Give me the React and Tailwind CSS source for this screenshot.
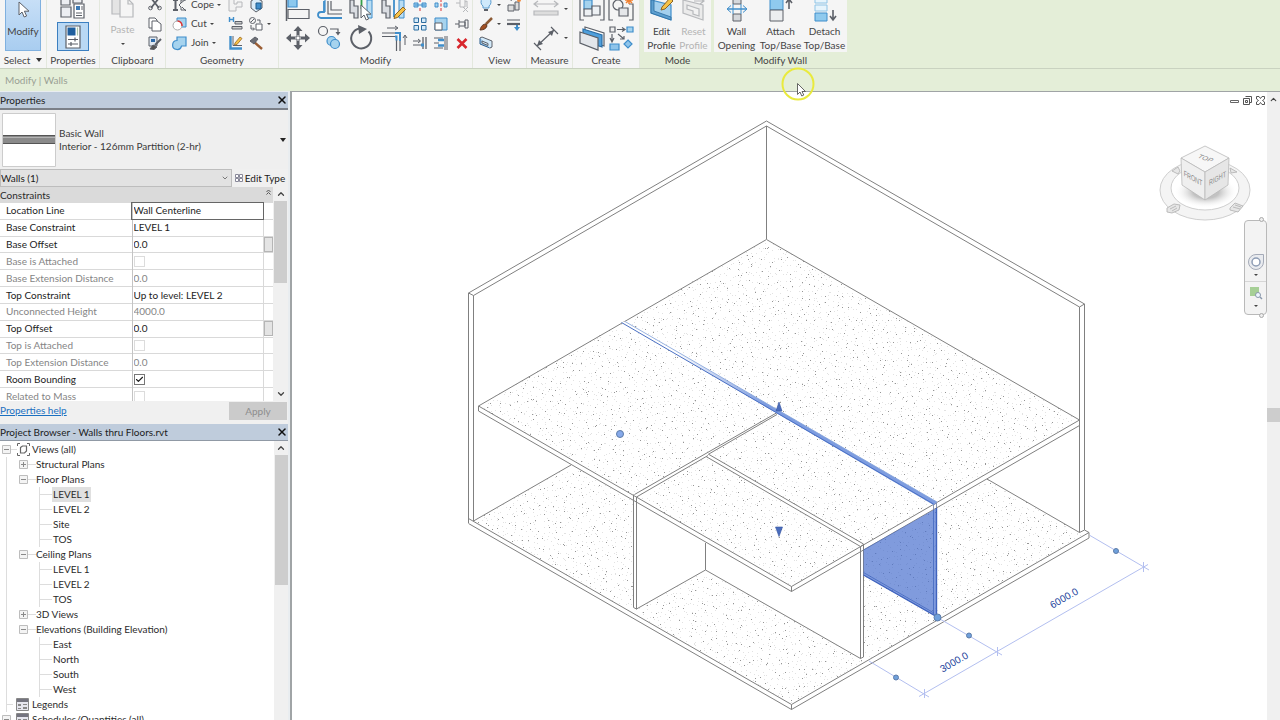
import { useState } from 'react'
import { Check, ChevronDown, ChevronUp, X } from 'lucide-react'

const INK = '#5c6068'
const BLUE = '#3f8ecb'
const SKY = '#a6d3ee'

/* ---------- icon helpers ---------- */

function Small({ children, dim }) {
  return (
    <svg width="16" height="16" viewBox="0 0 16 16" fill="none" stroke={INK} strokeWidth="1" className={dim ? 'opacity-40 shrink-0' : 'shrink-0'}>
      {children}
    </svg>
  )
}

function Large({ children, dim }) {
  return (
    <svg width="28" height="28" viewBox="0 0 28 28" fill="none" stroke={INK} strokeWidth="1.2" className={dim ? 'opacity-40 shrink-0' : 'shrink-0'}>
      {children}
    </svg>
  )
}

function Caret() {
  return (
    <svg width="4" height="2" viewBox="0 0 4 2" className="shrink-0">
      <path d="M0 0h4L2 2z" fill="#444" />
    </svg>
  )
}

const pointer = 'M1 0v13l3-3 2.2 5 2.4-1-2.2-4.8H11z'

const icons = {
  select: (
    <Large><path transform="translate(9 6)" d={pointer} fill="#fff" strokeWidth="1" /></Large>
  ),
  typeProps: (
    <Large>
      <path d="M2 0h9v11H2zM14 0h9v9h-9zM2 13h10v10H2z" fill="#eceef2" />
      <path d="M15 10h10v14H15z" fill="#fff" />
      <path d="M17 12h4v4h-4z" fill="#3d7ab5" stroke="none" />
      <path d="M23 12v4M17 19h6M17 21.500h6" strokeWidth="1" />
    </Large>
  ),
  props: (
    <Large>
      <path d="M7 3h14v22H7z" fill="#fff" />
      <path d="M8.500 4.500h8v8h-8z" fill="#1f5f9e" stroke="none" />
      <path d="M18.500 4.500v8" stroke="#a9c6a9" />
      <path d="M9 16.500h10M9 21h10M16 14.500v4M12 19v4" />
    </Large>
  ),
  paste: (
    <Large dim>
      <path d="M3 2h15v18H3z" fill="#ccc" />
      <path d="M11 5h8l5 5v13H11z" fill="#f6f6f6" /><path d="M19 5v5h5" />
    </Large>
  ),
  scissors: (
    <Small><path d="M4 1l8 10M12 1L4 11" strokeWidth="1.8" /><circle cx="3.500" cy="11" r="1.800" /><circle cx="12.500" cy="11" r="1.800" /></Small>
  ),
  copy: (
    <Small><path d="M2 2h6l2 2v8H2z" fill="#fff" /><path d="M5 5h5l4 3v7H5z" fill="#fff" /></Small>
  ),
  match: (
    <Small><path d="M2 2h8v9H2z" fill="#dfe8f2" /><path d="M4 4h4v3H4z" fill="#2d6aa8" stroke="none" /><path d="M14 4L8 10" strokeWidth="2" /><path d="M3 14l3-4 4 2-3 2.500z" fill="#555" /></Small>
  ),
  cope: (
    <Small><path d="M1 3h5M3.500 3v10M1 13h5" strokeWidth="2" /><path d="M14 3H9v3l-2 2 2 2v3h5M14 2L9 6M14 14l-4-4" /></Small>
  ),
  cut: (
    <Small><path d="M5 2h9v9H8V7H5z" fill={SKY} stroke={BLUE} /><circle cx="5.500" cy="9.500" r="4.500" fill="#fff" stroke="#aaa" /><path d="M5.500 5a4.500 4.500 0 0 1 4.500 5" stroke="#d33" strokeWidth="1.500" /></Small>
  ),
  join: (
    <Small><path d="M5 2h9v9H9.500A4.500 4.500 0 1 1 5 5.500z" fill={SKY} stroke={BLUE} strokeWidth="1.200" /></Small>
  ),
  joinRoof: (
    <Small dim><path d="M1 2h5v5h3V5h5v5H8v4H1z" fill="#eee" /></Small>
  ),
  beam: (
    <Small><path d="M1.500 1v5M5.500 1v5M1.500 3.500h4" stroke={BLUE} strokeWidth="1.400" /><path d="M7 5.500h7v2.500H7zM4 10.500h10v2.500H4z" fill="#ccc" /></Small>
  ),
  wallJoin: (
    <Small><path d="M2.500 1v12.500H14" strokeWidth="2.400" stroke={BLUE} /><path d="M5 1v9.500h9" /><path d="M7 8l5-6 2 1.500-5 6L6.500 10z" fill="#f6c247" stroke="#9a6a24" strokeWidth=".8" /></Small>
  ),
  split: (
    <Small><path d="M3 4l5-3 6 3v7l-6 4-5-4z" fill="#d9ecf8" /><path d="M8 6h5v6H8z" fill={BLUE} stroke="#1c5a8c" /></Small>
  ),
  paint: (
    <Small><circle cx="4.500" cy="4.500" r="3" /><path d="M3 6l3-3" /><path d="M8 8h6v6H8z" fill="#fff" /><path d="M3 9v4h3M5 11.500L6.500 13 5 14.500M9 4h3v3" /></Small>
  ),
  hammer: (
    <Small><path d="M6 7l8 7" stroke="#9a5d33" strokeWidth="2.400" /><path d="M2 6l5-4 3 2-4 5z" fill="#6c6f76" /></Small>
  ),
  align: (
    <Large><path d="M2.500 1v25" strokeWidth="1.500" /><path d="M4 3h9v9H4z" fill="#8cc8ee" stroke={BLUE} /><path d="M4 14.500h21v9H4z" fill="#f4f4f4" /></Large>
  ),
  offset: (
    <Large>
      <path d="M26 23H5a3 3 0 0 1 0-6h3V6" strokeWidth="1.800" stroke={BLUE} />
      <path d="M26 19H12V6M15 6v9h11" /><path d="M9 4v13" stroke={BLUE} />
    </Large>
  ),
  mirrorPick: (
    <Large>
      <path d="M2 5h4v6h4v12H6v-5H2z" fill="#dadde2" /><path d="M24 5h-5v18h5z" fill="#b9ddf3" stroke={BLUE} strokeWidth="1" />
      <path d="M13.500 2v12" stroke="#33a04a" strokeWidth="1.800" /><path transform="translate(12 10)" d={pointer} fill="#fff" strokeWidth="1" />
    </Large>
  ),
  mirrorDraw: (
    <Large>
      <path d="M2 5h4v6h4v12H6v-5H2z" fill="#dadde2" /><path d="M24 5h-5v18h5z" fill="#b9ddf3" stroke={BLUE} strokeWidth="1" />
      <path d="M14 2v20" stroke={BLUE} strokeWidth="1.800" /><path d="M15 20l8-8 2.500 2.500-8 8-3.500 1z" fill="#f6c247" stroke="#8a6326" strokeWidth="1" />
    </Large>
  ),
  move: (
    <Large>
      <path d="M14 6v5M14 17v5M6 14h5M17 14h5" strokeWidth="3" />
      <path d="M14 2l4.500 5h-9zM14 26l4.500-5h-9zM2 14l5-4.500v9zM26 14l-5-4.500v9z" fill={INK} stroke="none" />
      <path d="M12 12h4v4h-4z" fill="#fff" strokeWidth="1" />
    </Large>
  ),
  copyEl: (
    <Large>
      <circle cx="7" cy="7" r="4.500" fill="#f5f5f5" /><path d="M14 5h8v4" /><path d="M19.500 8h5L22 11.500z" fill={INK} stroke="none" />
      <circle cx="15.500" cy="17" r="4.500" fill={SKY} stroke={BLUE} /><circle cx="19" cy="20" r="4.500" fill={SKY} stroke={BLUE} />
    </Large>
  ),
  rotate: (
    <Large><path d="M20.500 7.500a10 10 0 1 1-9-3" strokeWidth="2" /><path d="M10 1l9 4-8 5z" fill={INK} stroke="none" /></Large>
  ),
  trim: (
    <Large>
      <path d="M2 9h15M2 12.500h13M20 16v11M16.500 16v11" /><path d="M15 9h5v8M15 12.500h1.500v4" stroke={BLUE} strokeWidth="2" />
      <path d="M7 4h10M15 2l3 2-3 2M25 21v-9M23 14l2-3 2 3" strokeWidth="1" />
    </Large>
  ),
  splitEl: (
    <Small><path d="M2 6h4v4H2zM10 6h4v4h-4z" fill={SKY} stroke={BLUE} /><path d="M3 8h10" stroke={BLUE} /><path d="M8 2v3M8 11v3" stroke="#d33" /></Small>
  ),
  splitGap: (
    <Small><path d="M2 6h3v4H2zM11 6h3v4h-3z" fill={SKY} stroke={BLUE} /><path d="M8 2v3M8 6.500v3M8 11v3" stroke="#d33" /></Small>
  ),
  unpin: (
    <Small dim><path d="M2 6h4M6 3v7h5V3M11 5l2-1v6M9 10l5 5M14 10l-5 5" /></Small>
  ),
  array: (
    <Small><path d="M2 2h4.500v4.500H2zM9.500 2H14v4.500H9.500zM2 9.500h4.500V14H2z" fill="#d3eafa" stroke="#2b6c9f" /><path d="M9.500 9.500H14V14H9.500z" fill="#d3eafa" stroke="#2b6c9f" /></Small>
  ),
  scale: (
    <Small><path d="M2 2h12v12H2z" fill={SKY} stroke={BLUE} /><path d="M2 7h7v7H2z" fill="#fff" /></Small>
  ),
  pin: (
    <Small><path d="M1 8h4M5 4v8M5 6h6v4H5M11 4v8h3V4z" /></Small>
  ),
  trimOne: (
    <Small><path d="M1 6h7M6 4l2.500 2L6 8M1 10h9" /><path d="M11 2v12M14 2v12" strokeWidth="1.300" /><path d="M9 10h3" stroke={BLUE} strokeWidth="3" /></Small>
  ),
  trimMany: (
    <Small><path d="M1 3h9M1 13h9M1 8h5" /><path d="M5 5h6M5 10.500h6" stroke={BLUE} strokeWidth="2.500" /><path d="M12 1v14M14 1v14" /></Small>
  ),
  remove: (
    <Small><path d="M3.500 4l9 9M12.500 4l-9 9" stroke="#d8262c" strokeWidth="2.600" /></Small>
  ),
  bulb: (
    <Small><path d="M5 9a5 5 0 1 1 6 0v2H5z" fill="#cfe9fb" stroke="#5b9ccf" /><path d="M6 13h4" strokeWidth="2" /></Small>
  ),
  brush: (
    <Small><path d="M14 2L8 8" stroke="#8c5a34" strokeWidth="2.500" /><path d="M2 14c1-4 3-6 6-6l1 2c-1 3-4 4-7 4z" fill="#a14f23" stroke="#5d3620" /></Small>
  ),
  cutProfile: (
    <Small><path d="M2 3l10 4v6L2 9z" fill="#9cc7ea" stroke="#2c5f8d" /><path d="M2 3l2-1 10 4v6l-2 1M4 6l6 2.500v2L4 8z" fill="#d3eafa" /></Small>
  ),
  hideEl: (
    <Small><path d="M2 8h6v6H2zM9 5h4v8H9z" fill="#ddd" /><path d="M5 4a4 3 0 0 1 7-2" /><circle cx="13" cy="3" r="2" fill="#f08a3c" stroke="none" /></Small>
  ),
  linework: (
    <Small><path d="M1 4h13" /><path d="M1 8h13" strokeWidth="2.200" /><path d="M11 9v3" stroke={BLUE} strokeWidth="2" /><path d="M8 11h6l-3 4z" fill={BLUE} stroke="none" /></Small>
  ),
  measure: (
    <Large dim><path d="M3 9h22M6 6L2 9l4 3M22 6l4 3-4 3" /><path d="M2 16h24v4H2z" fill="#bbb" /></Large>
  ),
  dimension: (
    <Large><path d="M5 22L22 6M2 19l7 7M19 3l7 7" /><path d="M5 22l2-6 4 4zM22 6l-2 6-4-4z" fill={INK} stroke="none" /></Large>
  ),
  group: (
    <Large>
      <path d="M5 2H2v23h4M22 2h4v23h-4" /><path d="M6 5h8v9H6z" fill={SKY} stroke={BLUE} /><path d="M6 14h8v7H6zM14 11h8v9h-8z" fill="#eef1f4" />
    </Large>
  ),
  similar: (
    <Large>
      <path d="M5 2H2v23h4M22 9h4v16h-4" /><circle cx="11" cy="10" r="5" /><path d="M12 13h9v8h-9z" fill="#e5e7ea" />
      <path d="M22 1v8M18 5h8M19 2l6 6M25 2l-6 6" stroke="#f08030" strokeWidth="1.500" />
    </Large>
  ),
  parts: (
    <Large>
      <path d="M7 3l19 6v13L7 15z" fill="#fff" /><path d="M5 5l19 6v12L5 17z" fill="#4e9fdc" stroke="#2a6da5" /><path d="M2 8l18 6v12L2 19z" fill="#e3e6ea" />
    </Large>
  ),
  assembly: (
    <Large>
      <path d="M3 3h5v5H3z" fill="#eee" /><path d="M20 3h6v5h-6z" fill={SKY} stroke={BLUE} /><path d="M10 5.500h7M15 3.500l3 2-3 2M5 10v7M3 14l2 4 2-4M11 10l6 5M13 15h4v-3" />
      <path d="M3 20h9v6H3zM21 16l4 4-4 4-4-4z" fill="#8fc4ea" stroke={BLUE} />
    </Large>
  ),
  editProfile: (
    <Large><path d="M3 4l20 5v15L3 17z" fill="#a3d0ee" stroke={BLUE} /><path d="M3 4h3v11l17 6v3L3 17z" fill="#5c9fd0" stroke="#2b6ca0" strokeWidth=".8" /><path d="M14 11l8-9 3 3-8 8-4 1z" fill="#f6c247" stroke="#8a6326" strokeWidth="1" /></Large>
  ),
  resetProfile: (
    <Large dim><path d="M3 4l20 5v15L3 17z" fill="#ddd" /><path d="M7 9l12 4v7l-6-2v-3l-6-2z" fill="#eee" /><path d="M14 5h9M20 2l4 3-4 3" /></Large>
  ),
  opening: (
    <Large><path d="M10 1h8v7h-8zM10 18h8v7h-8z" fill="#d5d8dc" strokeWidth="1" /><path d="M5 13h18" stroke={BLUE} strokeWidth="1.500" /><path d="M8 9.500L4 13l4 3.500M20 9.500l4 3.500-4 3.500M10 8v10M18 8v10" stroke={BLUE} strokeWidth="1" /></Large>
  ),
  attach: (
    <Large><path d="M3 1h13v13H3z" fill="#8fcaee" stroke={BLUE} strokeWidth="1" /><path d="M3 14h13v11H3z" fill="#eceef0" strokeWidth="1" /><path d="M22 13V4M19 7l3-4 3 4" strokeWidth="1.600" /></Large>
  ),
  detach: (
    <Large><path d="M4 1h12v6H4zM4 9h12v6H4z" fill="#e6f4fc" stroke="#8fc4e6" strokeWidth="1" /><path d="M4 17h12v8H4z" fill="#8fcaee" stroke={BLUE} strokeWidth="1" /><path d="M22 14v9M19 20l3 4 3-4" strokeWidth="1.600" /></Large>
  ),
}

/* ---------- ribbon ---------- */

function Panel({ title, width, green, children }) {
  return (
    <section className={`${width} shrink-0 flex flex-col justify-end h-17 bg-[#f5f5f5] ${green ? 'mr-[3px]' : 'border-r border-[#e3e8dd]'}`}>
      <div className="h-13 flex items-end justify-center">{children}</div>
      <h2 className={`h-4 text-center leading-4 whitespace-nowrap ${green ? 'bg-[#e4eed8]' : ''}`}>{title}</h2>
    </section>
  )
}

function Tool({ icon, label, text, caret, className = '' }) {
  return (
    <button type="button" aria-label={text ? undefined : label} className={`flex items-center h-[19px] gap-[3px] shrink-0 ${className}`}>
      {icons[icon]}
      {text && <span>{text}</span>}
      {caret && <Caret />}
    </button>
  )
}

function BigTool({ icon, label, className = '' }) {
  return (
    <button type="button" aria-label={label} className={`h-[29px] flex items-center justify-center shrink-0 ${className}`}>
      {icons[icon]}
    </button>
  )
}

function TextTool({ icon, lines, dim, className = '' }) {
  return (
    <button type="button" className={`flex flex-col items-center leading-[14px] shrink-0 ${dim ? 'text-[#b4b4b4]' : ''} ${className}`}>
      {icons[icon]}
      {lines.map((l) => <span key={l}>{l}</span>)}
    </button>
  )
}

function Ribbon() {
  return (
    <div className="h-17 shrink-0 flex items-end bg-[#e4eed8]">
      <Panel width="w-[47px]" title={<span className="inline-flex items-center gap-1.5">Select <svg width="6" height="4" viewBox="0 0 6 4"><path d="M0 0h6L3 4z" fill="#333" /></svg></span>}>
        <button type="button" className="w-9 h-14 mb-px flex flex-col items-center justify-end pb-3 leading-[14px] border border-[#7fb0df] bg-linear-to-b from-[#c9e0f7] to-[#a9cdf0]">
          {icons.select}
          <span>Modify</span>
        </button>
      </Panel>
      <Panel width="w-[53px]" title="Properties">
        <div className="flex flex-col items-center">
          <BigTool icon="typeProps" label="Type Properties" />
          <BigTool icon="props" label="Properties palette" className="w-8 mb-px border border-[#3c7fc0] bg-[#b9d8f4]" />
        </div>
      </Panel>
      <Panel width="w-[66px]" title="Clipboard">
        <button type="button" className="w-10 flex flex-col items-center leading-[14px] text-[#b4b4b4]">
          {icons.paste}
          <span>Paste</span>
          <span className="h-4 flex items-center"><Caret /></span>
        </button>
        <div className="ml-1">
          <Tool icon="scissors" label="Cut to clipboard" />
          <Tool icon="copy" label="Copy to clipboard" />
          <Tool icon="match" label="Match type" />
        </div>
      </Panel>
      <Panel width="w-[113px]" title="Geometry">
        <div className="w-14">
          <Tool icon="cope" text="Cope" caret />
          <Tool icon="cut" text="Cut" caret />
          <Tool icon="join" text="Join" caret />
        </div>
        <div className="w-5">
          <Tool icon="joinRoof" label="Join roof" />
          <Tool icon="beam" label="Beam joins" />
          <Tool icon="wallJoin" label="Wall joins" />
        </div>
        <div className="w-6">
          <Tool icon="split" label="Split face" />
          <Tool icon="paint" label="Paint" caret />
          <Tool icon="hammer" label="Demolish" />
        </div>
      </Panel>
      <Panel width="w-[194px]" title="Modify">
        <div className="grid grid-cols-4 w-32">
          <BigTool icon="align" label="Align" />
          <BigTool icon="offset" label="Offset" />
          <BigTool icon="mirrorPick" label="Mirror, pick axis" />
          <BigTool icon="mirrorDraw" label="Mirror, draw axis" />
          <BigTool icon="move" label="Move" />
          <BigTool icon="copyEl" label="Copy" />
          <BigTool icon="rotate" label="Rotate" />
          <BigTool icon="trim" label="Trim to corner" />
        </div>
        <div className="grid grid-cols-[21px_21px_16px] ml-0.5">
          <Tool icon="splitEl" label="Split element" />
          <Tool icon="splitGap" label="Split with gap" />
          <Tool icon="unpin" label="Unpin" />
          <Tool icon="array" label="Array" />
          <Tool icon="scale" label="Scale" />
          <Tool icon="pin" label="Pin" />
          <Tool icon="trimOne" label="Trim single" />
          <Tool icon="trimMany" label="Trim multiple" />
          <Tool icon="remove" label="Delete" />
        </div>
      </Panel>
      <Panel width="w-[54px]" title="View">
        <div className="w-7">
          <Tool icon="bulb" label="Hide in view" caret />
          <Tool icon="brush" label="Override graphics" caret />
          <Tool icon="cutProfile" label="Cut profile" />
        </div>
        <div className="w-4 mb-[19px]">
          <Tool icon="hideEl" label="Displace elements" />
          <Tool icon="linework" label="Linework" />
        </div>
      </Panel>
      <Panel width="w-[46px]" title="Measure">
        <div>
          {[['measure', 'Measure between'], ['dimension', 'Aligned dimension']].map(([icon, label]) => (
            <button key={icon} type="button" aria-label={label} className="h-[29px] flex items-center gap-1">
              {icons[icon]}
              <Caret />
            </button>
          ))}
        </div>
      </Panel>
      <Panel width="w-[67px]" title="Create">
        <div className="grid grid-cols-2 w-[58px]">
          <BigTool icon="group" label="Create group" />
          <BigTool icon="similar" label="Create similar" />
          <BigTool icon="parts" label="Create parts" />
          <BigTool icon="assembly" label="Create assembly" />
        </div>
      </Panel>
      <div className="w-1" />
      <Panel width="w-[67px]" title="Mode" green>
        <TextTool icon="editProfile" lines={['Edit', 'Profile']} className="w-8" />
        <TextTool icon="resetProfile" lines={['Reset', 'Profile']} dim className="w-8" />
      </Panel>
      <Panel width="w-[133px]" title="Modify Wall" green>
        <TextTool icon="opening" lines={['Wall', 'Opening']} className="w-11" />
        <TextTool icon="attach" lines={['Attach', 'Top/Base']} className="w-11" />
        <TextTool icon="detach" lines={['Detach', 'Top/Base']} className="w-11" />
      </Panel>
    </div>
  )
}

/* ---------- palettes ---------- */

function PaletteHeader({ title }) {
  return (
    <header className="h-4 shrink-0 flex items-center justify-between bg-[#bfccdc] text-[#1c1c1c]">
      <h2>{title}</h2>
      <button type="button" aria-label={`Close ${title}`}><X size={12} strokeWidth={3} color="#111" /></button>
    </header>
  )
}

const PROPERTIES = [
  { name: 'Location Line', value: 'Wall Centerline', active: true },
  { name: 'Base Constraint', value: 'LEVEL 1' },
  { name: 'Base Offset', value: '0.0', assoc: true },
  { name: 'Base is Attached', value: false, locked: true },
  { name: 'Base Extension Distance', value: '0.0', locked: true },
  { name: 'Top Constraint', value: 'Up to level: LEVEL 2' },
  { name: 'Unconnected Height', value: '4000.0', locked: true },
  { name: 'Top Offset', value: '0.0', assoc: true },
  { name: 'Top is Attached', value: false, locked: true },
  { name: 'Top Extension Distance', value: '0.0', locked: true },
  { name: 'Room Bounding', value: true },
  { name: 'Related to Mass', value: false, locked: true },
]

function PropertyRow({ name, value, locked, active, assoc }) {
  const id = name.toLowerCase().replaceAll(' ', '-')
  const [state, setState] = useState(value)
  return (
    <tr className={`border-b border-[#d9d9d9] leading-[15px] ${locked ? 'text-[#858585]' : 'text-[#1c1c1c]'}`}>
      <th scope="row" className="p-0 pl-1.5 font-normal text-left border-r border-[#c4c4c4]">
        <label htmlFor={id}>{name}</label>
      </th>
      <td className={`p-0 ${active ? 'outline outline-[#666]' : ''}`}>
        {typeof value === 'boolean' ? (
          <span className="grid w-3.5 h-3.5 place-items-center">
            <input
              id={id} type="checkbox" checked={state} disabled={locked} onChange={() => setState(!state)}
              className={`col-start-1 row-start-1 appearance-none size-[11px] border bg-white ${locked ? 'border-[#dcdcdc]' : 'border-[#777]'}`}
            />
            {state && <Check size={9} strokeWidth={3} className="col-start-1 row-start-1 pointer-events-none" />}
          </span>
        ) : (
          <input
            id={id} type="text" value={state} disabled={locked} onChange={(e) => setState(e.target.value)}
            className="block w-full h-[15px] pl-px outline-none"
          />
        )}
      </td>
      <td className="p-0 border-l border-[#d9d9d9]">
        {assoc && <button type="button" aria-label={`Associate ${name}`} className="block w-[9px] h-[15px] border border-[#b5b5b5] bg-[#e4e4e4]" />}
      </td>
    </tr>
  )
}

function PropertiesPalette() {
  return (
    <section className="shrink-0 h-[332px] flex flex-col bg-[#f0f0f0]">
      <PaletteHeader title="Properties" />
      <button type="button" className="h-[61px] border-t-2 border-[#7b8088] flex items-center text-left pl-0.5 pr-0.5 bg-[#efefef] text-[#3a3a3a]">
        <svg width="54" height="54" viewBox="0 0 54 54">
          <path d="M.5.5h53v53H.5z" fill="#fff" stroke="#ccc" />
          <path d="M1 22h52v9H1z" fill="#8a8a8a" />
          <path d="M1 22.500h52M1 30.500h52" stroke="#555" />
          <path d="M1 24.500h52" stroke="#b4b4b4" />
        </svg>
        <span className="flex-1 pl-[3px] leading-[13px]">Basic Wall<br />Interior - 126mm Partition (2-hr)</span>
        <svg width="6" height="4" viewBox="0 0 6 4"><path d="M0 0h6L3 4z" fill="#222" /></svg>
      </button>
      <div className="flex h-[18px] shrink-0">
        <div className="relative w-[232px] border border-[#bdbdbd] bg-[#e2e2e2]">
          <select aria-label="Selected elements" className="w-full h-full appearance-none leading-4 text-[#1c1c1c]">
            <option>Walls (1)</option>
          </select>
          <ChevronDown size={8} className="absolute right-0.5 top-1 pointer-events-none" />
        </div>
        <button type="button" className="flex-1 flex items-center justify-center gap-0.5 text-[#1c1c1c]">
          <svg width="8" height="8" viewBox="0 0 8 8" fill="#fff" stroke="#889" strokeWidth="1">
            <path d="M.5.5h3v3h-3zM4.500.5h3v3h-3zM.5 4.500h3v3h-3zM4.500 4.500h3v3h-3z" />
          </svg>
          Edit Type
        </button>
      </div>
      <div className="flex-1 min-h-0 flex">
        <div className="flex-1 overflow-hidden bg-white">
          <div className="h-4 flex justify-between bg-[#dadada] text-[#2b2b2b] leading-4">
            <span>Constraints</span>
            <svg width="5" height="6" viewBox="0 0 5 6" className="m-0.5" fill="none" stroke="#555"><path d="M.5 3l2-2 2 2M.5 5.500l2-2 2 2" /></svg>
          </div>
          <table className="w-full h-[202px] table-fixed border-collapse">
            <colgroup><col className="w-[132px]" /><col /><col className="w-[10px]" /></colgroup>
            <tbody>{PROPERTIES.map((p) => <PropertyRow key={p.name} {...p} />)}</tbody>
          </table>
        </div>
        <div className="w-[15px] flex flex-col items-center bg-[#f0f0f0]">
          <ChevronUp size={10} strokeWidth={3} className="my-0.5 shrink-0" />
          <div className="w-[13px] h-[82px] bg-[#cdcdcd]" />
          <ChevronDown size={10} strokeWidth={3} className="mt-auto mb-0.5 shrink-0" />
        </div>
      </div>
      <footer className="h-[23px] shrink-0 flex items-start justify-between">
        <a href="#help" className="underline text-[#1a6fc0] leading-[18px]">Properties help</a>
        <button type="button" disabled className="w-[58px] h-[18px] mt-px mr-px bg-[#cbcbcb] text-[#8d8d8d]">Apply</button>
      </footer>
    </section>
  )
}

const VIEWS = [
  { name: 'Structural Plans', items: [], closed: true },
  { name: 'Floor Plans', items: ['LEVEL 1', 'LEVEL 2', 'Site', 'TOS'], selected: 'LEVEL 1' },
  { name: 'Ceiling Plans', items: ['LEVEL 1', 'LEVEL 2', 'TOS'] },
  { name: '3D Views', items: [], closed: true },
  { name: 'Elevations (Building Elevation)', items: ['East', 'North', 'South', 'West'] },
]

function Toggle({ closed, label }) {
  return (
    <button type="button" aria-label={`Toggle ${label}`} className="shrink-0">
      <svg width="9" height="9" viewBox="0 0 9 9" fill="#f4f4f4" stroke="#bdbdbd">
        <path d="M.5.5h8v8h-8z" />
        <path d={closed ? 'M2 4.500h5M4.500 2v5' : 'M2 4.500h5'} stroke="#8a8a8a" />
      </svg>
    </button>
  )
}

function ScheduleIcon() {
  return (
    <svg width="13" height="13" viewBox="0 0 13 13" className="shrink-0">
      <path d="M.5.5h12v12H.5z" fill="#e6e6ee" stroke="#888" />
      <path d="M1 1h11v3H1z" fill="#74747f" />
      <path d="M2 6h3v2H2zM7 6h4v1H7zM2 10h3v1H2zM7 9h4v2H7z" fill="#888" />
    </svg>
  )
}

function ProjectBrowser() {
  return (
    <section className="flex-1 min-h-0 flex flex-col bg-white">
      <PaletteHeader title="Project Browser - Walls thru Floors.rvt" />
      <div className="flex-1 min-h-0 flex border-t border-[#9099a5]">
        <ul className="flex-1 overflow-hidden pt-px leading-[15px] text-[#2b2b2b]">
          <li>
            <div className="flex items-center h-[15px] pl-0.5">
              <Toggle label="Views" />
              <span className="w-1.5 border-t border-[#ddd]" />
              <svg width="13" height="13" viewBox="0 0 13 13" className="mr-0.5" fill="none" stroke="#666">
                <path d="M.5 3V.5H3M10 .5h2.500V3M12.500 10v2.500H10M3 12.500H.5V10" />
                <path d="M3.500 4.500l2-1.500h4v5l-2 2h-4z" fill="#fff" strokeWidth="1.200" />
              </svg>
              Views (all)
            </div>
            <ul className="ml-1.5 border-l border-[#ddd]">
              {VIEWS.map((v) => (
                <li key={v.name}>
                  <div className="flex items-center h-[15px] pl-3">
                    <Toggle closed={v.closed} label={v.name} />
                    <span className="w-2 border-t border-[#ddd]" />
                    {v.name}
                  </div>
                  {v.items.length > 0 && (
                    <ul className="ml-8">
                      {v.items.map((item) => (
                        <li key={item} className="flex items-center h-[15px] border-l border-[#ddd]">
                          <span className="w-3 border-t border-[#ddd]" />
                          <a href="#view" className={`px-px ${item === v.selected ? 'bg-[#e0e0e0]' : ''}`}>{item}</a>
                        </li>
                      ))}
                    </ul>
                  )}
                </li>
              ))}
            </ul>
          </li>
          <li className="flex items-center h-[15px] ml-1.5 border-l border-[#ddd] gap-[3px]">
            <span className="w-1.5 border-t border-[#ddd]" />
            <ScheduleIcon />
            Legends
          </li>
          <li className="flex items-center h-[15px] pl-0.5 gap-[3px]">
            <Toggle label="Schedules" />
            <span className="-mr-px" />
            <ScheduleIcon />
            Schedules/Quantities (all)
          </li>
        </ul>
        <div className="w-[14px] flex flex-col items-center bg-[#f0f0f0]">
          <ChevronUp size={10} strokeWidth={3} className="my-0.5 shrink-0" />
          <div className="w-[13px] h-[130px] bg-[#cdcdcd]" />
        </div>
      </div>
    </section>
  )
}

/* ---------- model view ---------- */

// concrete stipple: one jittered dot per cell, the same on every render
function stipple(seed, step, x0, y0, x1, y1) {
  let s = seed
  const next = () => {
    s = (s * 16807) % 2147483647
    return s / 2147483647
  }
  let d = ''
  for (let y = y0; y < y1; y += step) {
    for (let x = x0; x < x1; x += step) {
      d += `M${Math.floor(x + next() * step)} ${Math.floor(y + next() * step)}h1v1h-1z`
    }
  }
  return d
}

const LIGHT_DOTS = stipple(1717, 5, 470, 239, 1090, 706)
const DARK_DOTS = stipple(9191, 9, 470, 239, 1090, 706)

function Dim({ x, y, children }) {
  return (
    <text transform={`translate(${x} ${y}) rotate(-30)`} textAnchor="middle" dominantBaseline="central" className="text-[10px] font-['Liberation_Sans',sans-serif] fill-[#1d3f9c]">
      {children}
    </text>
  )
}

function Model() {
  return (
    <svg viewBox="292 92 975 628" preserveAspectRatio="xMinYMin meet" className="w-full h-full" fill="none" role="img" aria-label="3D view of two-level building">
      <defs>
        <clipPath id="floors">
          <path d="M766 239L1079 420 791 586 478 406z" />
          <path d="M571 465L633 501V609H637L706 570 860 659 868 660 791 704 474 521z" />
          <path d="M864 549L987 479 1079 532 1084 536 868 660 864 657z" />
        </clipPath>
        <linearGradient id="band" gradientUnits="userSpaceOnUse" x1="622" y1="0" x2="800" y2="0">
          <stop offset="0.300" stopColor="#fff" />
          <stop offset="0.800" stopColor="#7d9ce0" />
        </linearGradient>
      </defs>

      <g clipPath="url(#floors)" shapeRendering="crispEdges">
        <path d={LIGHT_DOTS} fill="#e2e2e2" />
        <path d={DARK_DOTS} fill="#959595" />
      </g>

      {/* wall tops showing on the upper floor */}
      <g fill="#fff">
        <path d="M634 494L779 411V415L636 497z" />
        <path d="M706 457L709 454 864 544 861 547z" />
        <path d="M478 406L791 586 1079 420V426L791 592 478 411z" />
      </g>

      <g stroke="#808080" strokeWidth="1">
        <path d="M468.500 523V293L766.500 121 1084.500 304V530" />
        <path d="M473.500 521V295.500L766.500 126 1079.500 307V532.500" />
        <path d="M468.500 293l5 2.500M1084.500 304l-5 3M766.500 126V239" />
        <path d="M478.500 406L766.500 239.500 1079.500 420 791.500 586.500zV411L791.500 591.500 1079.500 425.500M791.500 586.500v5" />
        <path d="M468.500 518.500L791.500 704.500 1089 532.500 1084.500 530 1079.500 532.500M468.500 523.500L791.500 709.500 1089 538V532.500M791.500 704.500v5" />
        <path d="M473.500 521L571 465M987 479l92.500 53.500" />
        <path d="M634.500 494.500L779 411.500M636.500 497L708 455.500M708 454.500l69-40" />
        <path d="M633.500 494.500V607.500L636.500 609 705.500 570 860.500 658.500M636.500 497V609M705.500 543v27" />
        <path d="M706 456.500L860.500 546.500V658.500L863.500 657V544L709 454.500M860.500 546.500l3-2" />
      </g>

      {/* selected wall */}
      <path d="M863.500 549.500L937 508V617L863.500 575z" fill="#4a70cf" fillOpacity=".7" />
      <path d="M863.500 572.500L934 613M933.500 510V614" stroke="#4468c0" strokeWidth=".8" />
      <path d="M863.500 575L936.500 616.500V508" stroke="#3f63be" strokeWidth="1.400" />
      <path d="M933.500 510V505L936.500 503V508" stroke="#6e7ea0" strokeWidth=".8" />
      <path d="M621.500 322.500L625 321.500 937 502 933.500 505z" fill="url(#band)" />
      <path d="M621.500 322.500L933.500 504" stroke="#4a70c4" />
      <path d="M625 321.500L937 502" stroke="#7f9fd8" strokeWidth=".8" />

      <g fill="#4a6dbd" stroke="#36549f" strokeWidth=".6">
        <path d="M779 402l3 9h-6z" />
        <path d="M775.500 527h7l-3.500 9.500z" />
      </g>

      {/* temporary dimensions */}
      <g stroke="#b3bff0">
        <path d="M1090 535.500L1149 570M940 619L1002 655M869 661L929 697M919 696.500L1148 564.500" />
        <path d="M924.500 689v9M997.500 647v9M1143.500 562v10" />
      </g>
      <g fill="#6fa0dc" stroke="#5d7ca8" strokeWidth="1">
        <circle cx="620" cy="434" r="3.500" fill="#86a9ea" />
        <circle cx="937.500" cy="617.500" r="3.500" />
        <circle cx="969" cy="635.500" r="2.500" />
        <circle cx="896" cy="677.500" r="2.500" />
        <circle cx="1116" cy="551" r="2.500" />
      </g>
      <Dim x={1064} y={598}>6000.0</Dim>
      <Dim x={954} y={662}>3000.0</Dim>
    </svg>
  )
}

function ViewCube() {
  return (
    <svg width="96" height="80" viewBox="0 0 96 80" className="absolute right-[13px] top-[52px]" role="img" aria-label="View cube">
      <defs>
        <radialGradient id="shade"><stop offset=".4" stopColor="#999" stopOpacity=".6" /><stop offset="1" stopColor="#fff" stopOpacity="0" /></radialGradient>
      </defs>
      <path fillRule="evenodd" d="M2 46a45 30 0 1 0 90 0a45 30 0 1 0-90 0M13 44a34 22 0 1 0 68 0a34 22 0 1 0-68 0" fill="#f4f4f4" stroke="#cfcfcf" />
      <ellipse cx="48" cy="48" rx="32" ry="16" fill="url(#shade)" />
      <g stroke="#b9b9b9" strokeWidth=".8">
        <path d="M23 14L47 2 71 14 47 28z" fill="#f7f7f7" />
        <path d="M23 14L47 28V56L24 41z" fill="#efefef" />
        <path d="M71 14L47 28V56L70 41z" fill="#e6e6e6" />
      </g>
      <g className="text-[8px] font-['Liberation_Sans',sans-serif] fill-[#8a8a8a]" textAnchor="middle">
        <text transform="matrix(.85 .3 -.6 .6 46 16)">TOP</text>
        <text transform="matrix(.68 .38 0 1 35 37)">FRONT</text>
        <text transform="matrix(.68 -.38 0 1 59.500 37)">RIGHT</text>
      </g>
      <g fill="#e6e6e6" stroke="#b5b5b5" strokeWidth=".9">
        <path d="M9 64l7-4 6 1-1 5-7 3-5-1zM12 65l6-3M14 67l5-3" />
        <path d="M72 64l5-5 8 3-5 6-8-2zM75 63l7 2M77 61l6 2" />
        <path d="M14 27l6-4 2 4-2 3zM72 24l7 4-6 1z" />
      </g>
    </svg>
  )
}

function NavigationBar() {
  return (
    <nav className="absolute right-0 top-32 w-[23px] h-[95px] flex flex-col items-center pt-8 rounded-sm border border-[#b9b9b9] bg-[#f3f3f3]">
      <span className="absolute right-0.5 -top-1 size-[5px] rounded-full border border-[#aaa] bg-[#eee]" />
      <button type="button" aria-label="Steering wheel">
        <svg width="18" height="18" viewBox="0 0 18 18" fill="#e9ebef" stroke="#a5abb8">
          <path d="M9 1.500h7.500V9A7.500 7.500 0 1 1 9 1.500z" /><circle cx="9" cy="9" r="4" fill="#fff" stroke="#8e9db5" strokeWidth="1.500" />
        </svg>
      </button>
      <span className="h-2 flex items-center"><Caret /></span>
      <button type="button" aria-label="Zoom region" className="w-full mt-0.5 pt-1 flex justify-center border-t border-[#d6d6d6]">
        <svg width="14" height="14" viewBox="0 0 14 14" fill="none">
          <path d="M1 1h9v9H1z" fill="#a6cf96" /><circle cx="9" cy="9" r="2.500" fill="#eef6ff" stroke="#8a98ab" /><path d="M11 11l2 2" stroke="#8a98ab" strokeWidth="1.500" />
        </svg>
      </button>
      <span className="h-3 flex items-center"><Caret /></span>
      <span className="absolute right-0.5 -bottom-1 size-[5px] rounded-full border border-[#aaa] bg-[#eee]" />
    </nav>
  )
}

function WindowButtons() {
  return (
    <div className="absolute right-0.5 top-1 flex gap-1">
      <button type="button" aria-label="Minimize"><svg width="9" height="9" viewBox="0 0 9 9" fill="#fff" stroke="#666"><path d="M.5 4.500h8v2h-8z" /></svg></button>
      <button type="button" aria-label="Restore"><svg width="9" height="9" viewBox="0 0 9 9" fill="#fff" stroke="#555"><path d="M2.500.5h6v6h-2M.5 2.500h6v6h-6zM2.500 4.500h2v2h-2z" /></svg></button>
      <button type="button" aria-label="Close view"><svg width="9" height="9" viewBox="0 0 9 9" fill="#fff" stroke="#555"><path d="M.5.5h2.500l1.500 2 1.500-2h2.500v2.500l-2 1.500 2 1.500v2.500H6l-1.500-2-1.500 2H.5V6l2-1.500-2-1.500z" /></svg></button>
    </div>
  )
}

export default function App() {
  return (
    <div className="relative h-screen flex flex-col overflow-hidden bg-white font-['Lato',sans-serif] text-[10px] text-[#444]">
      <Ribbon />
      <div className="h-[23px] shrink-0 pl-[5px] border-t border-[#c9d2c0] bg-[#e4eed8] leading-[22px] text-[#9aa094]">Modify | Walls</div>
      <div className="flex-1 min-h-0 flex">
        <aside className="w-[290px] shrink-0 flex flex-col pt-px pr-0.5 bg-[#e9edf0]">
          <PropertiesPalette />
          <ProjectBrowser />
        </aside>
        <main className="relative flex-1 min-w-0 border-l-2 border-t border-[#a0a4a6]">
          <Model />
          <WindowButtons />
          <ViewCube />
          <NavigationBar />
        </main>
        <div className="w-[13px] shrink-0 flex flex-col items-center border-t border-[#a0a4a6] bg-[#f0f0f0]">
          <ChevronUp size={9} strokeWidth={3} className="mt-[3px]" />
          <div className="w-full h-[14px] mt-[304px] bg-[#cdcdcd]" />
        </div>
      </div>
      <svg width="36" height="36" viewBox="0 0 36 36" className="absolute left-[780px] top-[66px] pointer-events-none" fill="none">
        <circle cx="18" cy="18" r="15.500" stroke="#e9ea3e" strokeWidth="2" />
        <path d="M17.500 17.500v11l2.500-2.500 1.800 4 2-1-1.800-3.500h3.500z" fill="#fff" stroke="#555" strokeWidth=".9" />
      </svg>
    </div>
  )
}
